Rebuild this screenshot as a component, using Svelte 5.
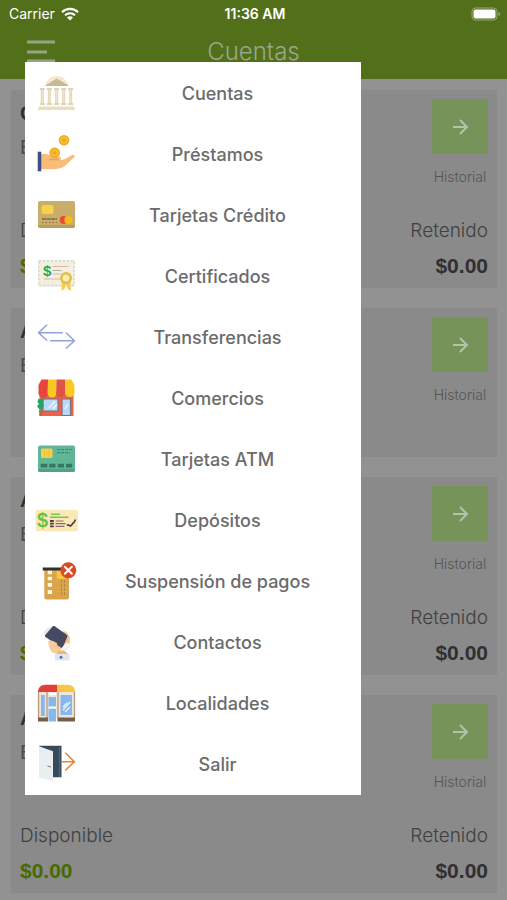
<!-- Accounts screen with the main navigation menu open on top of it. -->
<script lang="ts">
	interface Account {
		title: string;
		detail: string;
		available?: string;
		held?: string;
	}

	const accounts: Account[] = [
		{ title: 'C', detail: 'E', available: '$0.00', held: '$0.00' },
		{ title: 'A', detail: 'E' },
		{ title: 'A', detail: 'E', available: '$0.00', held: '$0.00' },
		{ title: 'A', detail: 'E', available: '$0.00', held: '$0.00' }
	];

	const menu = [
		{ icon: 'bank', label: 'Cuentas' },
		{ icon: 'loan', label: 'Préstamos' },
		{ icon: 'credit', label: 'Tarjetas Crédito' },
		{ icon: 'certificate', label: 'Certificados' },
		{ icon: 'transfer', label: 'Transferencias' },
		{ icon: 'store', label: 'Comercios' },
		{ icon: 'atm', label: 'Tarjetas ATM' },
		{ icon: 'deposit', label: 'Depósitos' },
		{ icon: 'suspend', label: 'Suspensión de pagos' },
		{ icon: 'contacts', label: 'Contactos' },
		{ icon: 'places', label: 'Localidades' },
		{ icon: 'exit', label: 'Salir' }
	];
</script>

{#snippet icon(name: string)}
	<svg class="menu-icon" viewBox="0 0 44 45" aria-hidden="true">
		{#if name === 'bank'}
			<path d="M11 16c1-5 5-10 11.700-10S33 11 34.500 16z" fill="#f7e8cf" />
			<path d="M12 15l10.700-6.500L34 15v1H12z" fill="#c9b896" />
			{#each [8.300, 15.300, 22.700, 29.700, 36.700] as x}
				<path d="M{x - 2.500} 18h5v2h-1v13h1v2h-5v-2h1V20h-1z" fill="#e3d3b5" />
				<path d="M{x} 20v13" stroke="#f2e6d0" />
			{/each}
			<path d="M5 36.500h35v1.500h1v2H4v-2h1z" fill="#ecdcc0" />
		{:else if name === 'loan'}
			<path d="M7 23.500c4-1.500 8-.5 10 2h7c3 0 4 2 2 3.500 5 0 8-3 12-5 2-1 3.500 1 2 2.500-4 3-8 9-13 10.500-6 2-13 1-20 1z" fill="#f7bd79" />
			<path d="M15 28.500h10" stroke="#e9a45f" stroke-width="1.500" />
			<path d="M3.700 20.700h3.600v19.600H3.700z" fill="#3e4f86" />
			{#each [[30, 9.300], [20.700, 21.700]] as [cx, cy]}
				<circle {cx} {cy} r="5.300" fill="#efaa20" />
				<circle {cx} {cy} r="3.800" fill="#f6bf34" />
				<path d="M{cx} {cy - 2}v4M{cx - 2} {cy}h4" stroke="#e8a524" stroke-width="1.600" />
			{/each}
		{:else if name === 'credit'}
			<rect x="4" y="9" width="37" height="26.500" rx="2" fill="#c9ad6a" />
			<path d="M4 33h37v1a2 2 0 0 1-2 2H6a2 2 0 0 1-2-2z" fill="#b89c5c" />
			<rect x="7.500" y="13" width="12" height="9" rx="2" fill="#f8d04a" />
			<path d="M8 27h15" stroke="#7d6840" stroke-width="1.400" stroke-dasharray="4 .6" />
			<path d="M8 30.500h15" stroke="#7d6840" stroke-width="1.200" stroke-dasharray="1.500 2" />
			<circle cx="29.700" cy="28" r="4" fill="#e84b38" />
			<circle cx="34.300" cy="28" r="4" fill="#f8b818" />
		{:else if name === 'certificate'}
			<rect x="4" y="7" width="37" height="26.500" fill="#f0efe2" />
			<rect x="5" y="8" width="35" height="24.500" fill="none" stroke="#d3d8c8" stroke-width="1.300" stroke-dasharray="2 2" />
			<text class="sign" x="9" y="23" font-size="15" fill="#1faa62">$</text>
			<path d="M18.500 13.500h16M18.500 21h8M10 26h16" stroke="#e2b5a2" />
			<path d="M18.500 17.500h9" stroke="#a9b4a5" />
			<path d="M28 28l-.5 10 3-2 1.500-5 2 5 3 2-.5-10z" fill="#f3ce50" />
			<circle cx="32" cy="25" r="6" fill="#e4bd44" />
			<circle cx="32" cy="25" r="3.500" fill="#f7ebb0" />
		{:else if name === 'transfer'}
			<g fill="none" stroke="#94a1d5" stroke-width="1.500" stroke-linecap="round" stroke-linejoin="round">
				<path d="M28.300 18.700H4.500M12.700 11l-8.200 7.700 8.200 7.600" />
				<path d="M16.700 26.700h23.800M32.300 19l8.200 7.700-8.200 7.600" />
			</g>
		{:else if name === 'store'}
			<path d="M5.500 17h34v24h-34z" fill="#ec6148" />
			<path d="M7.500 4.500H14v13.500a4.700 4.700 0 0 1-9.500 0V10z" fill="#e8453c" />
			<path d="M14 4.500h8.500v13.500a4.300 4.300 0 0 1-9 0z" fill="#f9c922" />
			<path d="M22.500 4.500H31v13.500a4.300 4.300 0 0 1-8.800 0z" fill="#e05247" />
			<path d="M31 4.500h6.500l3 6v7.500a4.800 4.800 0 0 1-9.500 0z" fill="#f9c922" />
			<path d="M9 24h15v12H9zM28 24h8.500v16.500H28z" fill="#b9d9f6" stroke="#7a7182" stroke-width="1.200" />
			<path d="M15 33l6-7M19 34l4-5M31 34l3-5" stroke="#f4fbff" stroke-width="1.300" />
			<path d="M4.500 23.500l2 1 2-1.500 1 3-1.500 2 2 2-2 4H5l-2-3 2-2-1.500-2z" fill="#1fa565" />
			<path d="M5 35h4l-1 6H5.500z" fill="#b6693f" />
		{:else if name === 'atm'}
			<rect x="4" y="9.500" width="37" height="26.500" rx="2" fill="#60b796" />
			<path d="M4 33h37v1a2 2 0 0 1-2 2H6a2 2 0 0 1-2-2z" fill="#529f84" />
			<rect x="7" y="12.500" width="11.500" height="9.500" rx="1.500" fill="#f8ce48" />
			<path d="M10.500 13v8M15 13v8" stroke="#efc03e" />
			<path d="M23 13.500h15.500M23 16.700h13" stroke="#3f8570" stroke-width="1.200" stroke-dasharray="3 1" />
			<path d="M6.700 29.700h6.600M15.300 29.700h6.200M23.700 29.700h6.300M32 29.700h6.200" stroke="#397563" stroke-width="3.800" />
		{:else if name === 'deposit'}
			<rect x="1.500" y="12.700" width="42.500" height="21.600" rx="2.500" fill="#fce8b6" />
			<text class="sign" x="3" y="30" font-size="20" fill="#67c345">$</text>
			<path d="M17 17.300h9M16 20.200h18.500" stroke="#73c94d" stroke-width="1.500" />
			<path d="M16 24h3.800M16 26.700h3.800M16 29.400h3.800" stroke="#4d3d4c" stroke-width="1.800" />
			<path d="M21.500 24h8M21.500 26.700h10M21.500 29.400h9" stroke="#806b6d" stroke-width="1.200" />
			<path d="M33 28.500c2-2 2 1.500 4 0s1.500-3 3-3l1.500-3" fill="none" stroke="#493846" stroke-width="1.600" />
		{:else if name === 'suspend'}
			<path d="M10.300 11H35v28.500a2 2 0 0 1-2 2H12.300a2 2 0 0 1-2-2z" fill="#d9a44c" />
			<path d="M22.700 12.300h9v8.500h-9z" fill="#fbc83b" />
			<path d="M8.700 9.500h19v3h-19z" fill="#29313c" />
			<path d="M13.700 12.700H18v3.600h-4.300zM13.700 18.700H18v3.600h-4.300zM13.700 25H18v3.700h-4.300zM13.700 32H18v4h-4.300z" fill="#fff5e4" />
			<path d="M27.500 22v15M30.500 22v15" stroke="#b9853f" stroke-dasharray="3 1" />
			<circle cx="34.300" cy="12.300" r="8" fill="#da4825" />
			<path d="M30.800 8.800l7 7m0-7l-7 7" stroke="#fff" stroke-width="2" stroke-linecap="round" />
		{:else if name === 'contacts'}
			<path d="M29 12.500c2-.5 3.500.5 4.500 2l2.500 4-.5 7-5 8-8 1.500-6-6 3-8z" fill="#f6c48c" />
			<path d="M10.500 11.500l2-1 1-2 2.500.5 2-2.500 3 1.500-8 9-3-1z" fill="#e3e8f0" />
			<path d="M18.700 7.500c.6-.6 1.300-.6 2-.2l12 8.500c.7.5.9 1.200.6 2L29 28c-.5 1-1.300 1.200-2.200.6L11.500 18c-.8-.6-.8-1.200-.2-2z" fill="#444a61" />
			<path d="M14 22.500c2-2 5-.5 8 1 2 1 1.500 3-.5 2.700l-3-.7 6 4 2 5h-6c-3-1-4-3-5-6z" fill="#f9cc9a" />
			<path d="M25 32l7.500-8.500 3.500 1.500v4l-7 6z" fill="#f3f5f9" />
			<path d="M24 31.500h6l4 3.500H23z" fill="#f0b57b" />
			<path d="M21 35h14.500v6.500H21z" fill="#dfe6ef" />
			<circle cx="27" cy="38.300" r="1.500" fill="#5b6bb8" />
		{:else if name === 'places'}
			<path d="M4 12h37v26H4z" fill="#ece5da" />
			<path d="M4 12c0-4.500 3-7.300 7.500-7.300H23V12z" fill="#e43e38" />
			<path d="M23 4.700h10.500C38 4.700 41 7.500 41 12H23z" fill="#f7c548" />
			<path d="M4.500 12v26M13 12v26M24 12v26M40.500 12v26" stroke="#b69b7e" stroke-width="1.300" />
			<path d="M7 15h3.800v21H7zM14.500 17h7.500v10h-7.500zM14.500 28.500h7.500v13h-7.500zM26.500 15h11.500v20H26.500z" fill="#86b8eb" />
			<path d="M15 14h7M15 27.500h7" stroke="#fff" stroke-width="2" />
			<path d="M29 30l7-8M29 27l4-4M31 32l5-5" stroke="#e9f5ff" stroke-width="1.400" />
			<path d="M4 37.500h10v4H4zM23.500 37.500H41v4H23.500z" fill="#756047" />
		{:else}
			<path d="M5 4.700h22.500v31.600H17z" fill="#354a5a" />
			<path d="M25.500 6v30" stroke="#526b7a" />
			<path d="M5 5.300l14 5v30L5 36.300z" fill="#e9eff1" />
			<path d="M13.500 25l3.500 1" stroke="#77858c" stroke-width="1.300" />
			<path d="M27.500 20.700h12.800M31.700 12.300l8.600 8.400-8.600 8.300" fill="none" stroke="#ea8432" stroke-width="1.600" stroke-linecap="round" />
		{/if}
	</svg>
{/snippet}

<div class="screen">
	<header class="header">
		<div class="status">
			<span class="carrier">
				Carrier
				<svg width="18" height="14" viewBox="0 0 18 14" aria-hidden="true">
					<g fill="none" stroke="#fff" stroke-width="2.200">
						<path d="M1 5.200c4.500-4.300 11.500-4.300 16 0M4 8.300c3-2.700 7-2.700 10 0" />
					</g>
					<path d="M6 10.500c1.700-1.600 4.300-1.600 6 0l-3 3z" fill="#fff" />
				</svg>
			</span>
			<span class="time">11:36 AM</span>
			<svg class="battery" width="30" height="14" viewBox="0 0 30 14" aria-hidden="true">
				<rect x="1" y="1" width="25" height="12" rx="3.500" fill="none" stroke="#98a87a" />
				<rect x="2.500" y="2.500" width="22" height="9" rx="2" fill="#fff" />
				<path d="M27.500 5c2 .5 2 3.500 0 4z" fill="#98a87a" />
			</svg>
		</div>
		<div class="title-bar">
			<button class="burger" type="button" aria-label="Menú">
				<svg width="30" height="24" viewBox="0 0 30 24" aria-hidden="true">
					<path d="M1 3h28M1 13h20M1 22h28" stroke="#96a385" stroke-width="3" />
				</svg>
			</button>
			<h1>Cuentas</h1>
		</div>
	</header>

	<main class="accounts">
		{#each accounts as account}
			<section class="card">
				<div class="card-top">
					<div>
						<h2>{account.title}</h2>
						<p class="detail">{account.detail}</p>
					</div>
					<button class="history" type="button">
						<span class="tile">
							<svg width="18" height="18" viewBox="0 0 18 18" aria-hidden="true">
								<path d="M2 9h14M9 2l7 7-7 7" fill="none" stroke="#b5c2aa" stroke-width="2" />
							</svg>
						</span>
						Historial
					</button>
				</div>
				{#if account.available}
					<dl class="amounts">
						<div>
							<dt>Disponible</dt>
							<dd class="available">{account.available}</dd>
						</div>
						<div class="held">
							<dt>Retenido</dt>
							<dd>{account.held}</dd>
						</div>
					</dl>
				{/if}
			</section>
		{/each}
	</main>

	<nav class="menu">
		{#each menu as item}
			<button class="menu-item" type="button">
				{@render icon(item.icon)}
				<span>{item.label}</span>
			</button>
		{/each}
	</nav>
</div>

<style>
	:global(body) {
		margin: 0;
		background: #929292;
	}

	.screen {
		position: relative;
		min-height: 100vh;
		box-sizing: border-box;
		background: #929292;
		font-family: 'Liberation Sans', Arial, sans-serif;
	}

	button {
		padding: 0;
		border: none;
		background: transparent;
		font: inherit;
		cursor: pointer;
	}

	h1,
	h2,
	p,
	dl,
	dd {
		margin: 0;
	}

	.header {
		height: 79px;
		background: #52701a;
	}

	.status {
		display: grid;
		grid-template-columns: 1fr auto 1fr;
		align-items: center;
		height: 27px;
		padding: 0 6px 0 9px;
		font-family: Inter, sans-serif;
		font-size: 14px;
		color: #fff;
	}

	.carrier {
		display: flex;
		align-items: center;
		gap: 6px;
	}

	.time {
		font-weight: 600;
	}

	.battery {
		justify-self: end;
	}

	.title-bar {
		display: grid;
		grid-template-columns: 30px 1fr 30px;
		align-items: center;
		height: 48px;
		padding: 0 26px;
	}

	.burger svg {
		display: block;
	}

	h1 {
		font-family: Inter, sans-serif;
		font-size: 24px;
		font-weight: 300;
		text-align: center;
		color: #9aa68c;
	}

	.accounts {
		display: flex;
		flex-direction: column;
		gap: 20px;
		padding: 11px 10px 7px 11px;
	}

	.card {
		box-sizing: border-box;
		min-height: 149px;
		padding: 9px 9px 10px;
		background: #8a8a8a;
	}

	.card-top {
		display: flex;
		justify-content: space-between;
		height: 115px;
	}

	h2 {
		font-size: 20px;
		line-height: 28px;
		color: #303030;
	}

	.detail {
		padding-top: 6px;
		font-size: 20px;
		line-height: 28px;
		color: #4a4a4a;
	}

	.history {
		display: flex;
		flex-direction: column;
		align-items: center;
		width: 56px;
		height: 88px;
		font-family: Inter, sans-serif;
		font-size: 14px;
		font-weight: 300;
		line-height: 20px;
		color: #555;
	}

	.tile {
		display: flex;
		align-items: center;
		justify-content: center;
		width: 56px;
		height: 55px;
		margin-bottom: 13px;
		background: #76935a;
	}

	.amounts {
		display: flex;
		justify-content: space-between;
		color: #303030;
	}

	dt {
		font-family: Inter, sans-serif;
		font-size: 19px;
		font-weight: 300;
		line-height: 34px;
		color: #404040;
	}

	dd {
		font-size: 21px;
		font-weight: 700;
		line-height: 24px;
		padding: 6px 0 0;
	}

	.available {
		color: #486a00;
	}

	.held {
		text-align: right;
	}

	.menu {
		position: absolute;
		top: 62px;
		left: 25px;
		width: calc(100% - 171px);
		padding-bottom: 1px;
		background: #fff;
	}

	.menu-item {
		display: flex;
		align-items: center;
		width: 100%;
		height: 61px;
		padding: 0 4px 0 9px;
		font-family: Inter, sans-serif;
		font-size: 18px;
		font-weight: 500;
		color: #6b6b6b;
	}

	.menu-item span {
		flex: 1;
		padding-top: 2px;
		text-align: center;
	}

	.menu-icon {
		flex: none;
		width: 44px;
		height: 45px;
	}

	.sign {
		font-family: 'Liberation Sans', Arial, sans-serif;
		font-weight: 700;
	}
</style>
